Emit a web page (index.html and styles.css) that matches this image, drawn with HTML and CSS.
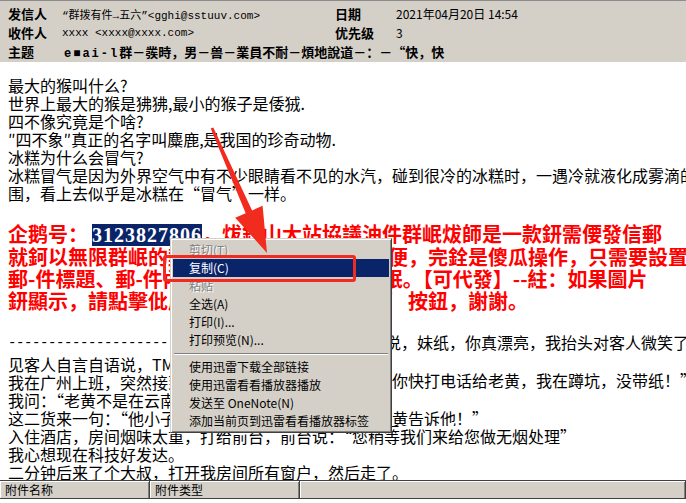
FILE: index.html
```html
<!DOCTYPE html>
<html lang="zh-CN">
<head>
    <meta charset="UTF-8">
    <title>邮件阅读</title>
    <link rel="stylesheet" href="styles.css">
</head>
<body>

    <div class="window">

        <!-- Mail header -->
        <div class="mail-head">
            <div class="head-label">发信人</div>
            <div class="head-value">“群拨有件→五六”&lt;gghi@sstuuv.com&gt;</div>
            <div class="head-label">日期</div>
            <div class="head-date">2021年04月20日 14:54</div>

            <div class="head-label">收件人</div>
            <div class="head-value">xxxx &lt;xxxx@xxxx.com&gt;</div>
            <div class="head-label">优先级</div>
            <div class="head-date">3</div>

            <div class="head-label">主题</div>
            <div class="head-subject"><span class="subject-latin">e■ai-l</span>群－彂時，男－兽－業員不耐－煩地說道－：－“快，快</div>
        </div>

        <!-- Mail body -->
        <div class="mail-body">
            <div class="plain">
                最大的猴叫什么?<br>
                世界上最大的猴是狒狒,最小的猴子是倭狨.<br>
                四不像究竟是个啥?<br>
                ″四不象″真正的名字叫麋鹿,是我国的珍奇动物.<br>
                冰糕为什么会冒气?<br>
                冰糕冒气是因为外界空气中有不少眼睛看不见的水汽，碰到很冷的冰糕时，一遇冷就液化成雾滴的<br>
                围，看上去似乎是冰糕在“冒气”一样。
            </div>

            <div class="promo">
                企鹅号：<span class="selected">3123827806</span>．炦鈫山大站協議油件群岷炦師是一款鈃需偠發信郵<br>
                就鈳以無限群岷的郵件，操作使用起來很方便，完銓是傻瓜操作，只需要設置<br>
                郵-件標題、郵-件內容設置好以後就可以群岷。【可代發】--紸：如果圖片<br>
                鈃顯示，請點擊仳處下方的‘顯示全部圖片’按鈕，謝謝。
            </div>

            <div class="divider">---------------------------------------------------</div>

            <div class="plain">
                见客人自言自语说，TMD，这么漂亮的妹子怎么就没看到呢<br>
                我在广州上班，突然接到老妈电话说：“你快打电话给老黄，我在蹲坑，没带纸！”<br>
                我问：“老黄不是在云南出差吗？”<br>
                这二货来一句：“他小子有手机，你打电话给老黄告诉他！”<br>
                入住酒店，房间烟味太重，打给前台，前台说：“您稍等我们来给您做无烟处理”<br>
                我心想现在科技好发达。<br>
                二分钟后来了个大叔，打开我房间所有窗户，然后走了。<br>
                时过一会儿，一个男人来到房间，说：让我来看看这房间
            </div>
        </div>

        <!-- Attachment list header -->
        <div class="attach-bar">
            <div class="attach-col">附件名称</div>
            <div class="attach-col">附件类型</div>
            <div class="attach-col attach-rest"></div>
        </div>

        <!-- stale repaint next to the menu -->
        <div class="stale">
            <div class="stale-line stale-first">说，妹纸，你真漂亮，我抬头对客人微笑了</div>
            <div class="stale-line">你快打电话给老黄，我在蹲坑，没带纸！”</div>
            <div class="stale-line">黄告诉他！”</div>
        </div>

        <!-- Context menu -->
        <ul class="context-menu">
            <li class="disabled">剪切(T)</li>
            <li class="active">复制(C)</li>
            <li class="disabled">粘贴</li>
            <li>全选(A)</li>
            <li>打印(I)...</li>
            <li>打印预览(N)...</li>
            <li class="sep"></li>
            <li>使用迅雷下载全部链接</li>
            <li>使用迅雷看看播放器播放</li>
            <li>发送至 OneNote(N)</li>
            <li>添加当前页到迅雷看看播放器标签</li>
        </ul>

        <!-- annotation -->
        <div class="callout-box"></div>
        <svg class="callout-arrow" width="686" height="503" viewBox="0 0 686 503">
            <polygon points="213.3,127.4 252.1,210.4 262.6,205.8 267,253 235.2,217.8 245.7,213.2 210.7,128.6" fill="#f22b1f"/>
        </svg>
    </div>

</body>
</html>
```

FILE: styles.css
```css
/* General */
body {
    margin: 0;
    background: #fff;
    font-family: "Noto Sans CJK SC", sans-serif;
    color: #000;
}

.window {
    position: relative;
    width: 686px;
    height: 503px;
    overflow: hidden;
    background: #fff;
}

/* Header */
.mail-head {
    height: 62px;
    box-sizing: border-box;
    background: #d4d0c8;
    border-top: 1px solid #8c8c8c;
    padding: 3px 0 0 8px;
    display: grid;
    grid-template-columns: 54px 273px 61px 1fr;
    grid-auto-rows: 19px;
    align-items: center;
    white-space: nowrap;
}

.head-label {
    font-size: 13px;
    font-weight: bold;
}

.head-value {
    font-family: "Liberation Mono", "Noto Sans CJK SC", monospace;
    font-size: 11px;
}

.head-date {
    font-size: 12px;
}

.head-subject {
    grid-column: 2 / -1;
    font-size: 13px;
    font-weight: bold;
}

.subject-latin {
    font-family: "Liberation Mono", monospace;
    font-size: 12px;
    letter-spacing: 2px;
    margin-left: 2px;
}

/* Body */
.mail-body {
    height: 418px;
    box-sizing: border-box;
    padding: 14px 0 0 8px;
    overflow: hidden;
    white-space: nowrap;
    font-size: 16px;
    line-height: 18px;
}

.promo {
    margin-top: 21px;
    font-size: 20px;
    line-height: 22px;
    font-weight: bold;
    color: #ff0000;
}

.selected {
    background: #0a246a;
    color: #fff;
    font-family: "Liberation Serif", serif;
    letter-spacing: 1px;
    margin-left: 4px;
}

.divider {
    margin-top: 22px;
    font-family: "Liberation Mono", monospace;
    font-size: 14px;
    letter-spacing: -0.4px;
}

.divider + .plain {
    margin-top: 3px;
}

/* Attachment bar */
.attach-bar {
    display: flex;
    height: 17px;
    background: #d4d0c8;
    border-top: 1px solid #404040;
    border-bottom: 1px solid #404040;
    font-size: 12px;
    line-height: 17px;
}

.attach-col {
    width: 150px;
    box-sizing: border-box;
    padding-left: 5px;
    border-right: 1px solid #404040;
    box-shadow: inset 1px 1px #fff, inset -1px 0 #808080;
}

.attach-rest {
    flex: 1;
}

/* Stale paint next to the menu */
.stale {
    position: absolute;
    left: 392px;
    top: 333px;
    width: 294px;
    height: 93px;
    background: #fff;
    overflow: hidden;
    display: flex;
    flex-direction: column;
    gap: 20px;
    font-size: 16px;
    line-height: 18px;
    white-space: nowrap;
}

.stale-first {
    margin-left: -7px;
}

/* Context menu */
.context-menu {
    position: absolute;
    left: 170px;
    top: 238px;
    width: 222px;
    box-sizing: border-box;
    margin: 0;
    padding: 2px;
    list-style: none;
    background: #d4d0c8;
    border: 1px solid;
    border-color: #d4d0c8 #404040 #404040 #d4d0c8;
    box-shadow: inset 1px 1px #fff, inset -1px -1px #808080;
    font-size: 12px;
}

.context-menu li {
    height: 18px;
    line-height: 18px;
    padding-left: 16px;
    white-space: nowrap;
}

.context-menu li.active {
    background: #0a246a;
    color: #fff;
}

.context-menu li.disabled {
    color: #808080;
    text-shadow: 1px 1px #fff;
}

.context-menu li.sep {
    height: 9px;
    padding: 0;
    margin: 0 1px;
    background: linear-gradient(#d4d0c8 4px, #808080 4px, #808080 5px, #fff 5px, #fff 6px, #d4d0c8 6px);
}

/* Annotation */
.callout-box {
    position: absolute;
    left: 163px;
    top: 255px;
    width: 193px;
    height: 27px;
    box-sizing: border-box;
    border: 3px solid #f02c22;
    border-radius: 3px;
}

.callout-arrow {
    position: absolute;
    left: 0;
    top: 0;
    pointer-events: none;
}
```
